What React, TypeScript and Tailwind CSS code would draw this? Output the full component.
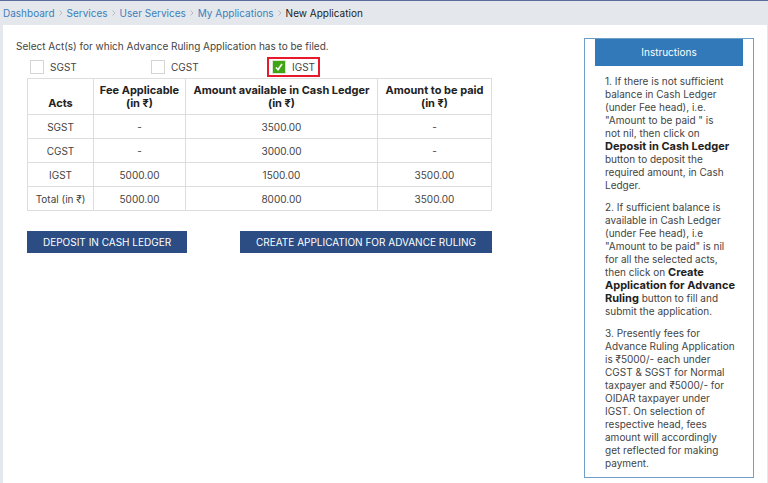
import { Fragment } from "react";

const breadcrumbs = ["Dashboard", "Services", "User Services", "My Applications"];

const acts = [
  { id: "sgst", name: "SGST", checked: false },
  { id: "cgst", name: "CGST", checked: false },
  { id: "igst", name: "IGST", checked: true },
];

const rows = [
  { act: "SGST", fee: "-", available: "3500.00", payable: "-" },
  { act: "CGST", fee: "-", available: "3000.00", payable: "-" },
  { act: "IGST", fee: "5000.00", available: "1500.00", payable: "3500.00" },
  { act: "Total (in ₹)", fee: "5000.00", available: "8000.00", payable: "3500.00" },
];

function Breadcrumb() {
  return (
    <nav aria-label="Breadcrumb" className="border-t border-[#5b6b9b] pl-[3px]">
      <ol className="flex h-6 items-center">
        {breadcrumbs.map((item) => (
          <Fragment key={item}>
            <li>
              <a href="#" className="text-[#3c7fbd]">
                {item}
              </a>
            </li>
            <li aria-hidden="true" className="flex w-3 justify-center">
              <svg viewBox="0 0 4 6" className="h-[6px] w-1">
                <path d="M0.5 0.5 3 3 0.5 5.5" fill="none" stroke="#b9bdc1" />
              </svg>
            </li>
          </Fragment>
        ))}
        <li className="text-[#222]">New Application</li>
      </ol>
    </nav>
  );
}

function ActCheckbox({ act }: { act: (typeof acts)[number] }) {
  return (
    <div className="w-[121px]">
      <label
        htmlFor={act.id}
        className={
          act.checked
            ? "flex h-5 w-fit items-center gap-[6px] border-2 border-[#e8192c] px-[3px]"
            : "flex h-5 w-fit items-center gap-[6px] border-2 border-transparent px-[3px]"
        }
      >
        <span className="grid size-[14px] place-items-center">
          <input
            id={act.id}
            type="checkbox"
            defaultChecked={act.checked}
            className="peer col-start-1 row-start-1 size-[14px] appearance-none border border-[#d4d4d4] bg-white checked:border-[#d9e8d2] checked:bg-[#3fa514]"
          />
          <svg
            viewBox="0 0 12 12"
            className="pointer-events-none invisible col-start-1 row-start-1 size-3 peer-checked:visible"
          >
            <path d="M3 6.4 5 8.8 9 3" fill="none" stroke="#fff" strokeWidth="1.6" />
          </svg>
        </span>
        {act.name}
      </label>
    </div>
  );
}

function FeeTable() {
  return (
    <table className="w-full table-fixed border-collapse text-center">
      <thead className="text-[11px] text-[#222]">
        <tr className="h-9 align-bottom leading-[13px]">
          <th scope="col" className="w-[66px] border border-[#ddd] pb-1 font-bold">
            Acts
          </th>
          <th scope="col" className="w-[92px] border border-[#ddd] pb-1 font-bold">
            Fee Applicable
            <br />
            (in ₹)
          </th>
          <th scope="col" className="border border-[#ddd] pb-1 font-bold">
            Amount available in Cash Ledger
            <br />
            (in ₹)
          </th>
          <th scope="col" className="w-[114px] border border-[#ddd] pb-1 font-bold">
            Amount to be paid
            <br />
            (in ₹)
          </th>
        </tr>
      </thead>
      <tbody>
        {rows.map((row) => (
          <tr key={row.act} className="h-6">
            <td className="border border-[#ddd] whitespace-nowrap">{row.act}</td>
            <td className="border border-[#ddd]">{row.fee}</td>
            <td className="border border-[#ddd]">{row.available}</td>
            <td className="border border-[#ddd]">{row.payable}</td>
          </tr>
        ))}
      </tbody>
    </table>
  );
}

function Instructions() {
  return (
    <aside className="w-[170px] shrink-0 border border-[#6f9fc9] px-[10px] pb-[7px]">
      <h2 className="bg-[#3179b8] text-center leading-[27px] text-white">
        Instructions
      </h2>
      <div className="flex flex-col gap-[9px] pt-[9px] pl-[10px] leading-[13px]">
        <p>
          1. If there is not sufficient <br />
          balance in Cash Ledger <br />
          (under Fee head), i.e. <br />
          "Amount to be paid " is <br />
          not nil, then click on <br />
          <strong className="text-[11px] text-[#222]">Deposit in Cash Ledger</strong>{" "}
          <br />
          button to deposit the <br />
          required amount, in Cash <br />
          Ledger.
        </p>
        <p>
          2. If sufficient balance is <br />
          available in Cash Ledger <br />
          (under Fee head), i.e <br />
          "Amount to be paid" is nil <br />
          for all the selected acts, <br />
          then click on{" "}
          <strong className="text-[11px] text-[#222]">
            Create <br />
            Application for Advance <br />
            Ruling
          </strong>{" "}
          button to fill and <br />
          submit the application.
        </p>
        <p>
          3. Presently fees for <br />
          Advance Ruling Application <br />
          is ₹5000/- each under <br />
          CGST &amp; SGST for Normal <br />
          taxpayer and ₹5000/- for <br />
          OIDAR taxpayer under <br />
          IGST. On selection of <br />
          respective head, fees <br />
          amount will accordingly <br />
          get reflected for making <br />
          payment.
        </p>
      </div>
    </aside>
  );
}

export default function App() {
  return (
    <div className="flex min-h-screen flex-col bg-[#e4e8ec] font-['Inter','DejaVu_Sans',sans-serif] text-[10px] leading-4 text-[#444]">
      <Breadcrumb />
      <main className="mr-px ml-[3px] flex flex-1 items-start justify-between bg-white pt-[13px] pr-[13px] pb-1 pl-[13px]">
        <div className="min-w-0 flex-1">
          <fieldset>
            <legend>
              Select Act(s) for which Advance Ruling Application has to be filed.
            </legend>
            <div className="flex pt-[3px] pl-[9px]">
              {acts.map((act) => (
                <ActCheckbox key={act.id} act={act} />
              ))}
            </div>
          </fieldset>
          <div className="max-w-[476px] pt-px pl-[11px]">
            <FeeTable />
            <div className="flex justify-between pt-5">
              <button className="h-[22px] bg-[#2b4d84] px-4 text-white">
                DEPOSIT IN CASH LEDGER
              </button>
              <button className="h-[22px] bg-[#2b4d84] px-4 text-white">
                CREATE APPLICATION FOR ADVANCE RULING
              </button>
            </div>
          </div>
        </div>
        <Instructions />
      </main>
    </div>
  );
}
